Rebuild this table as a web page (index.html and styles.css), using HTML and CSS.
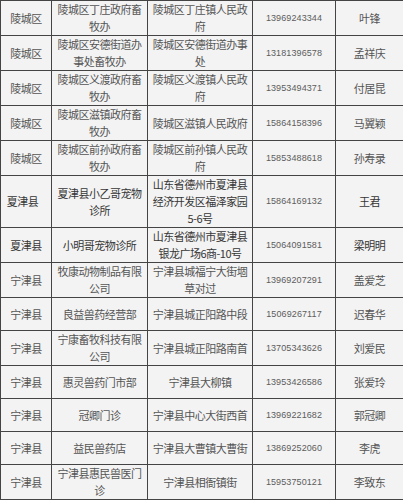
FILE: index.html
```html
<!DOCTYPE html>
<html lang="zh">
<head>
<meta charset="utf-8">
<title>名录</title>
<link rel="stylesheet" href="styles.css">
</head>
<body>
<table class="list">
<colgroup><col class="c1"><col class="c2"><col class="c3"><col class="c4"><col class="c5"></colgroup>
<tbody>
<tr><td>陵城区</td><td>陵城区丁庄政府畜牧办</td><td>陵城区丁庄镇人民政府</td><td class="tel">13969243344</td><td>叶锋</td></tr>
<tr><td>陵城区</td><td>陵城区安德街道办事处畜牧办</td><td>陵城区安德街道办事处</td><td class="tel">13181396578</td><td>孟祥庆</td></tr>
<tr><td>陵城区</td><td>陵城区义渡政府畜牧办</td><td>陵城区义渡镇人民政府</td><td class="tel">13953494371</td><td>付居昆</td></tr>
<tr><td>陵城区</td><td>陵城区滋镇政府畜牧办</td><td>陵城区滋镇人民政府</td><td class="tel">15864158396</td><td>马翼颖</td></tr>
<tr><td>陵城区</td><td>陵城区前孙政府畜牧办</td><td>陵城区前孙镇人民政府</td><td class="tel">15853488618</td><td>孙寿录</td></tr>
<tr class="dark"><td class="shift">夏津县</td><td>夏津县小乙哥宠物诊所</td><td>山东省德州市夏津县经济开发区福泽家园5-6号</td><td class="tel">15864169132</td><td>王君</td></tr>
<tr class="dark"><td>夏津县</td><td>小明哥宠物诊所</td><td>山东省德州市夏津县银龙广场6商-10号</td><td class="tel">15064091581</td><td>梁明明</td></tr>
<tr><td>宁津县</td><td>牧康动物制品有限公司</td><td>宁津县城福宁大街堌草对过</td><td class="tel">13969207291</td><td>盖爱芝</td></tr>
<tr><td>宁津县</td><td>良益兽药经营部</td><td>宁津县城正阳路中段</td><td class="tel">15069267117</td><td>迟春华</td></tr>
<tr><td>宁津县</td><td>宁康畜牧科技有限公司</td><td>宁津县城正阳路南首</td><td class="tel">13705343626</td><td>刘爱民</td></tr>
<tr><td>宁津县</td><td>惠灵兽药门市部</td><td>宁津县大柳镇</td><td class="tel">13953426586</td><td>张爱玲</td></tr>
<tr><td>宁津县</td><td>冠卿门诊</td><td>宁津县中心大街西首</td><td class="tel">13969221682</td><td>郭冠卿</td></tr>
<tr><td>宁津县</td><td>益民兽药店</td><td>宁津县大曹镇大曹街</td><td class="tel">13869252060</td><td>李虎</td></tr>
<tr><td>宁津县</td><td>宁津县惠民兽医门诊</td><td>宁津县相衙镇街</td><td class="tel">15953750121</td><td>李致东</td></tr>
</tbody>
</table>
</body>
</html>
```

FILE: styles.css
```css
html, body {
  margin: 0;
  padding: 0;
  background: #ffffff;
}

.list {
  border-collapse: collapse;
  table-layout: fixed;
  width: 403px;
  font-family: "Noto Sans CJK SC", "Noto Sans", sans-serif;
  font-size: 11px;
  letter-spacing: -0.5px;
  line-height: 17px;
  color: #555555;
}

.c1 { width: 51px; }
.c2 { width: 96px; }
.c3 { width: 105px; }
.c4 { width: 83px; }
.c5 { width: 68px; }

.list td {
  border: 1px solid #444444;
  background: #f3f3f3;
  text-align: center;
  vertical-align: middle;
  padding: 0 3px;
  height: 32px;
  word-break: break-all;
}

.list td.tel {
  font-family: "Liberation Sans", Arial, sans-serif;
  font-size: 9px;
  letter-spacing: 0.1px;
  color: #5c5c5c;
}

.list tr.dark td {
  color: #363636;
}

.list tr.dark td.tel {
  color: #5c5c5c;
}

.list td.shift {
  padding-right: 10px;
}
```
